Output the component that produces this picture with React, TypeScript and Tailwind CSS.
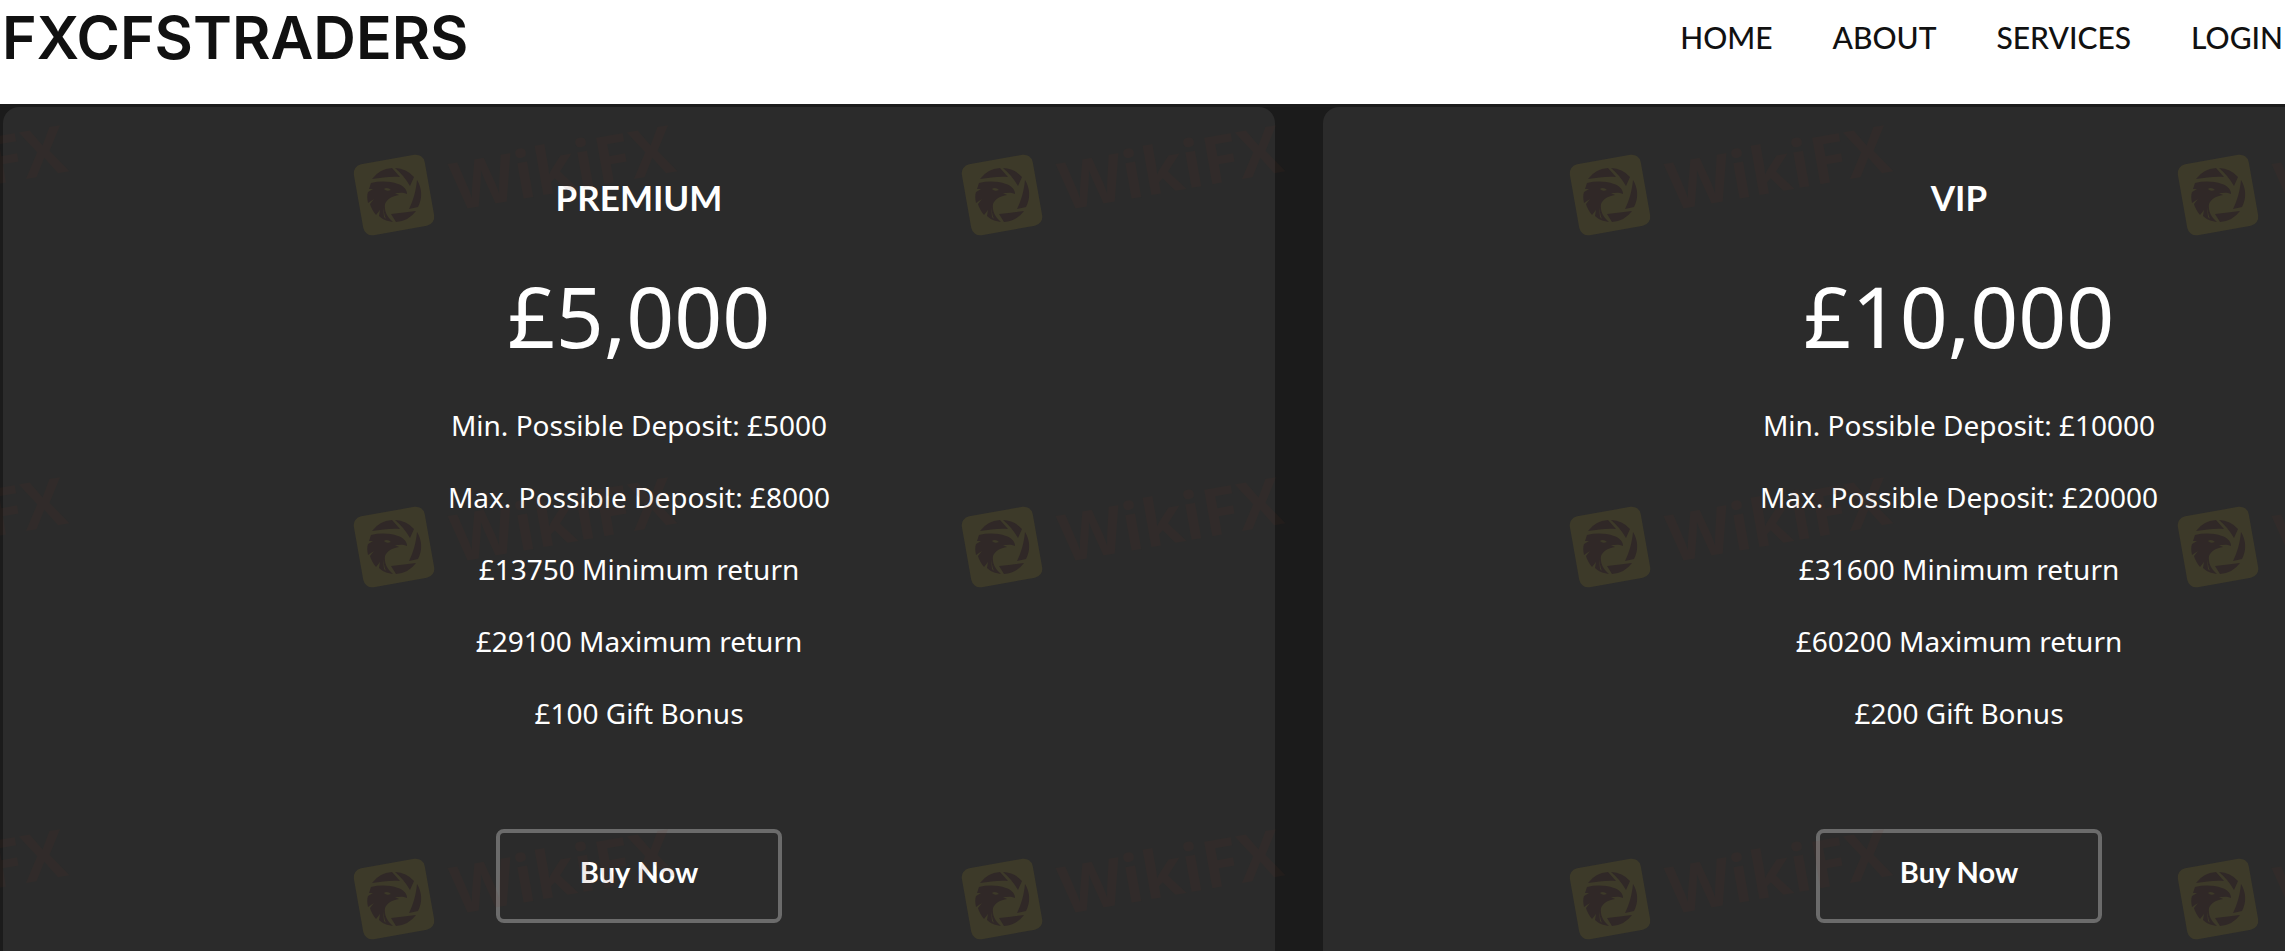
const plans = [
  {
    name: 'PREMIUM',
    price: '£5,000',
    features: [
      'Min. Possible Deposit: £5000',
      'Max. Possible Deposit: £8000',
      '£13750 Minimum return',
      '£29100 Maximum return',
      '£100 Gift Bonus',
    ],
  },
  {
    name: 'VIP',
    price: '£10,000',
    features: [
      'Min. Possible Deposit: £10000',
      'Max. Possible Deposit: £20000',
      '£31600 Minimum return',
      '£60200 Maximum return',
      '£200 Gift Bonus',
    ],
  },
]

const links = ['HOME', 'ABOUT', 'SERVICES', 'LOGIN']

const columns = [-1, 0, 1, 2, 3]
const rows = [0, 1, 2]

/** Tilted badge (eagle head inside shutter blades) followed by the brand name. */
function Mark({ x, y }: { x: number; y: number }) {
  return (
    <g transform={`translate(${x} ${y})`}>
      <rect x={-36} y={-36} width={72} height={72} rx={9} fill="#3d3a29" transform="rotate(-10)" />
      <g fill="#302827">
        <path d="M-22 -16 A27 27 0 0 1 -2 -27 L6 -18 C-4 -19 -12 -17 -22 -16Z" />
        <path d="M1 -27 A27 27 0 0 1 20 -18 L16 -9 C12 -16 7 -22 1 -27Z" />
        <path d="M23 -15 A27 27 0 0 1 24 12 L15 14 C19 6 22 -4 23 -15Z" />
        <path d="M22 16 A27 27 0 0 1 2 27 L-3 19 C6 18 14 17 22 16Z" />
        <path d="M-23 -12 C-14 -14 -5 -14 4 -11 C10 -9 13 -5 13 -1 C9 -3 5 -2 1 -2 L5 0 C-2 1 -7 4 -9 9 C-10 16 -7 22 -1 27 C-8 26 -12 24 -15 21 L-14 15 L-18 20 C-21 16 -23 13 -24 9 L-20 4 L-26 8 C-27 3 -27 0 -26 -3 L-21 -6 L-25 -6Z" />
      </g>
      <path d="M-10 -6 C-8 -8 -5 -7 -3 -5 C-6 -4 -8 -4 -10 -6Z M-11 12 L-10 22 L-8 24 C-10 20 -10 16 -11 12Z" fill="#3d3a29" />
      <text
        x={58}
        y={26}
        fontSize={66}
        fontWeight={700}
        fill="#6b3322"
        opacity={0.09}
        transform="rotate(-10)"
        className="font-['Open_Sans',sans-serif]"
      >
        WikiFX
      </text>
    </g>
  )
}

function Watermark() {
  return (
    <svg aria-hidden="true" className="pointer-events-none absolute inset-0 h-full w-full">
      {rows.map((row) =>
        columns.map((col) => <Mark key={`${row}-${col}`} x={394 + col * 608} y={91 + row * 352} />),
      )}
    </svg>
  )
}

function PlanCard({ name, price, features }: (typeof plans)[number]) {
  return (
    <article className="flex flex-col items-center rounded-t-2xl bg-[#2b2b2b] pt-[62px] text-center text-white">
      <h2 className="font-['Lato',sans-serif] text-[35px] leading-[56px] font-bold">{name}</h2>
      <p className="mt-6 text-[84px] leading-[134px]">{price}</p>
      <ul className="mt-1.5 flex flex-col text-[28px] leading-[72px]">
        {features.map((feature) => (
          <li key={feature}>{feature}</li>
        ))}
      </ul>
      <button
        type="button"
        className="mt-20 h-[94px] rounded-lg border-4 border-[#6b6b6b] px-20 pb-2 font-['Lato',sans-serif] text-[29px] font-bold"
      >
        Buy Now
      </button>
    </article>
  )
}

export default function App() {
  return (
    <div className="flex h-screen flex-col overflow-hidden bg-[#1b1b1b] font-['Noto_Sans',sans-serif]">
      <header className="flex h-[104px] shrink-0 items-start justify-between bg-white px-0.5 text-[#111]">
        <a href="#" className="font-['Inter',sans-serif] text-[59px] leading-[76px] font-semibold">
          FXCFSTRADERS
        </a>
        <nav className="flex gap-15 font-['Lato',sans-serif] text-[30px] leading-[74px] font-medium">
          {links.map((link) => (
            <a key={link} href="#">
              {link}
            </a>
          ))}
        </nav>
      </header>
      <main className="relative flex grow overflow-hidden pt-[3px]">
        <div className="-mr-[310px] ml-[3px] grid grow grid-cols-2 gap-12">
          {plans.map((plan) => (
            <PlanCard key={plan.name} {...plan} />
          ))}
        </div>
        <Watermark />
      </main>
    </div>
  )
}
